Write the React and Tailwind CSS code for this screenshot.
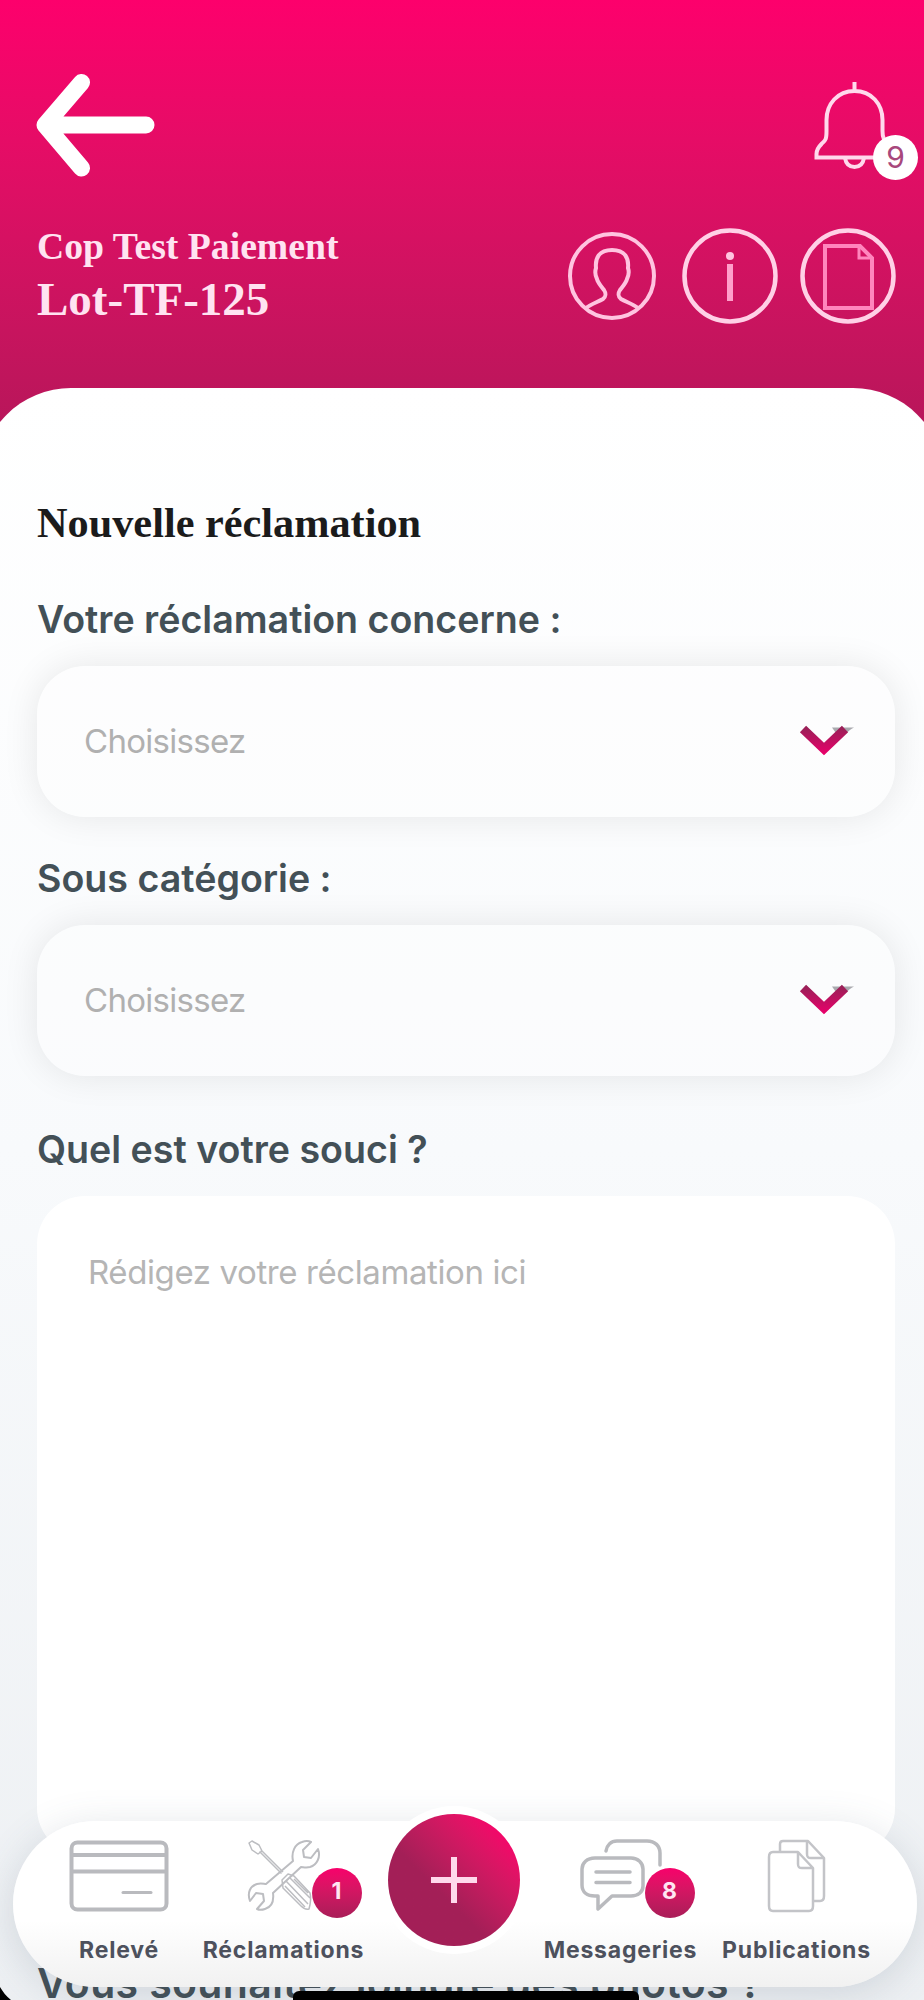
import { useState } from 'react';

const SERIF = "font-['Liberation_Serif',serif]";

const NAV_LEFT = [
  { label: 'Relevé', icon: CardIcon, width: 'w-[168px]' },
  { label: 'Réclamations', icon: ToolsIcon, badge: 1, badgePos: '-right-[41px]', width: 'w-[161px]' },
];

const NAV_RIGHT = [
  { label: 'Messageries', icon: ChatIcon, badge: 8, badgePos: '-right-[31px]', width: 'w-[177px]' },
  { label: 'Publications', icon: PagesIcon, width: 'w-[175px]' },
];

function BackIcon() {
  return (
    <svg className="w-[119px] h-[104px]" viewBox="36 73 119 104" fill="none" stroke="white" strokeWidth="17" strokeLinecap="round" strokeLinejoin="round">
      <path d="M81.500 82.500 45 125l36.500 43M49 125h97" />
    </svg>
  );
}

function BellIcon() {
  return (
    <svg className="w-[80px] h-[90px]" viewBox="813 80 80 90" fill="none" stroke="#ffd9ec" strokeWidth="4">
      <path d="M854.500 82v9M854.500 91c-17 0-28 13-28 29v11c0 9-1 9-5 13-3 3-5 6-5 10v3.500h77V154c0-4-2-7-5-10-4-4-6-5-6-13v-11c0-16-11-29-28-29z" />
      <path d="M845 158c1 6 4 9 9.500 9s8.500-3 9.500-9" />
    </svg>
  );
}

function ProfileIcon() {
  return (
    <svg className="w-[90px] h-[90px]" viewBox="0 0 90 90" fill="none" stroke="#ffc4e0" strokeWidth="4">
      <circle cx="45" cy="45" r="42" />
      <path d="M19 77c5-4 12-6 17-9 3-2 3-6 1-9-3-4-6-7-7-11-2-4-2-8-1-11-1-10 3-18 16-18s17 8 16 18c1 3 1 7-1 11-1 4-4 7-7 11-2 3-2 7 1 9 5 3 12 5 17 9" />
    </svg>
  );
}

function InfoIcon() {
  return (
    <svg className="w-[96px] h-[96px]" viewBox="0 0 96 96" fill="none" stroke="#ffd0e6" strokeWidth="4.500">
      <circle cx="48" cy="48" r="45.500" />
      <path d="M48 36v37" stroke="#ff9fcb" strokeWidth="6" />
      <circle cx="48" cy="28" r="4" fill="#ffc4e0" stroke="none" />
    </svg>
  );
}

function DocumentIcon() {
  return (
    <svg className="w-[96px] h-[96px]" viewBox="0 0 96 96" fill="none" stroke="#ffd0e6" strokeWidth="4.500">
      <circle cx="48" cy="48" r="45.500" />
      <path d="M25 18h35l12 12v50H25z" stroke="#ff86bd" strokeWidth="4" />
      <path d="M59 18v12h13" stroke="#ff86bd" strokeWidth="3" />
    </svg>
  );
}

function SelectChevron() {
  return (
    <svg className="-mt-[3px] w-[56px] h-[32px]" viewBox="0 0 56 32" fill="none">
      <defs>
        <linearGradient id="chevron" x1="0" y1="4" x2="0" y2="30" gradientUnits="userSpaceOnUse">
          <stop offset="0" stopColor="#9a2058" />
          <stop offset="1" stopColor="#e8006a" />
        </linearGradient>
      </defs>
      <path d="M33 3.500h22c-3 1.500-6 4-8 6l-7 4z" fill="#a9a9ae" />
      <path d="M4 5 25 25 46 5" stroke="url(#chevron)" strokeWidth="9" />
    </svg>
  );
}

function CardIcon() {
  return (
    <svg className="w-[100px] h-[72px]" viewBox="0 0 100 72" fill="none" stroke="#b9babe" strokeWidth="4">
      <rect x="2.500" y="2.500" width="95" height="67" rx="6" />
      <path d="M2 15h96M2 31.500h96" />
      <path d="M54 52.500h28" strokeWidth="3" strokeLinecap="round" />
    </svg>
  );
}

function ToolsIcon() {
  return (
    <svg className="w-[74px] h-[74px]" viewBox="0 0 74 74" fill="none" stroke="#bcbdc1" strokeWidth="2" strokeLinejoin="round">
      <path d="M2 4l3-2 7 4 3 6-4 3-6-4zM12.500 12.500l22 22M14 11l22 22" strokeWidth="1.500" />
      <path d="M46 22c-2-9 2-17 9-19 4-1.500 7-1 9 0l-8 8 1 7 7 1 7-9c3 8-1 16-8 18-4 1-7 0-9 0L26 54c1 8-1 14-8 16-3 1-6 1-8 0l7-8-1-7-7-1-6 8C0 54 3 47 10 45c4-1 7 0 9 0z" />
      <path d="M35 41l6-6 6 2 16 17c1 4 1 9-1 16-5 1-7-2-9-4L36 49zM39 42l22 23M43 39l20 20M38 47l20 21M47 40l14 14" strokeWidth="1.500" />
    </svg>
  );
}

function ChatIcon() {
  return (
    <svg className="ml-[2px] w-[84px] h-[74px]" viewBox="0 0 84 74" fill="none" stroke="#b9babe" strokeWidth="3.500" strokeLinecap="round" strokeLinejoin="round">
      <path d="M26 12c1-6 5-10 11-10h30c8 0 13 5 13 12v12" />
      <path d="M15 19h36c7 0 12 5 12 11v17c0 6-5 10-12 10H32L18 70V57h-3C7 57 2 53 2 46V30c0-6 5-11 13-11z" />
      <path d="M16 33h34M16 43.500h34" />
    </svg>
  );
}

function PagesIcon() {
  return (
    <svg className="w-[60px] h-[74px]" viewBox="0 0 60 74" fill="none" stroke="#c3c4c8" strokeWidth="2.500" strokeLinejoin="round">
      <path d="M13 12V5c0-2 1-3 3-3h25l16 17v38c0 3-1 5-4 5h-6" />
      <path d="M40 2v13c0 3 1 4 4 4h13M40 2" />
      <path d="M6 13h25l15 16v38c0 3-1 5-4 5H6c-3 0-4-2-4-5V18c0-3 1-5 4-5zM31 13v12c0 3 1 4 4 4h11" />
    </svg>
  );
}

function SelectField({ label }) {
  return (
    <div>
      <p className="text-[37.600px] leading-[44px] font-semibold text-[#435057]">{label}</p>
      <button className="mt-[24px] flex h-[151px] w-full items-center justify-between rounded-[48px] bg-white/30 pr-[40px] pl-[47px] shadow-[0_0_36px_rgba(0,0,0,0.09)]">
        <span className="text-[33px] tracking-[-0.7px] text-[#b0b0b0]">Choisissez</span>
        <SelectChevron />
      </button>
    </div>
  );
}

function NavItem({ label, icon: Icon, badge, badgePos, width }) {
  return (
    <button className={`flex flex-col items-center ${width}`}>
      <span className="relative flex h-[74px] items-center">
        <Icon />
        {badge && (
          <span className={`absolute top-[29px] flex size-[50px] items-center justify-center rounded-full bg-linear-to-b from-[#f8006b] to-[#a91d58] pb-1 text-[23px] font-bold text-[#ffe6f2] ${badgePos}`}>
            {badge}
          </span>
        )}
      </span>
      <span className="mt-[21px] text-[23px] leading-[32px] font-bold tracking-[0.8px] text-[#4d515d]">{label}</span>
    </button>
  );
}

export default function App() {
  const [message, setMessage] = useState('');

  return (
    <div className="relative h-[2000px] w-[924px] overflow-hidden bg-linear-to-b from-[#fd006c] to-[#b8165a] bg-[length:100%_425px] bg-no-repeat font-[Inter,sans-serif]">
      {/* Header */}
      <header className="h-[388px] pt-[73px] pr-[28px] pl-[37px]">
        <div className="flex items-start justify-between">
          <button className="-ml-px"><BackIcon /></button>
          <button className="relative mt-[7px] mr-[3px]">
            <BellIcon />
            <span className="absolute top-[55px] left-[60px] flex size-[45px] items-center justify-center rounded-full bg-white text-[30px] text-[#a8487c]">9</span>
          </button>
        </div>
        <div className="mt-[45px] flex items-start justify-between">
          <div className={`${SERIF} font-bold text-[#ffe3f1]`}>
            <p className="-mt-px text-[37.700px] leading-[50px]">Cop Test Paiement</p>
            <p className="mt-px text-[47px] leading-[54px]">Lot-TF-125</p>
          </div>
          <div className="mt-[6px] flex items-center">
            <ProfileIcon />
            <span className="mr-[22px] ml-[25px]"><InfoIcon /></span>
            <DocumentIcon />
          </div>
        </div>
      </header>

      {/* Form */}
      <main className="-mx-5 h-[1700px] rounded-t-[91px] bg-linear-to-b from-white via-[#f8fafc] via-45% to-[#eceff2] pt-[108px] pr-[49px] pl-[57px]">
        <h1 className={`${SERIF} text-[42.300px] leading-[54px] font-bold text-[#1b1b1b]`}>Nouvelle réclamation</h1>
        <div className="mt-[48px]"><SelectField label="Votre réclamation concerne :" /></div>
        <div className="mt-[40px]"><SelectField label="Sous catégorie :" /></div>
        <p className="mt-[52px] text-[37.600px] leading-[44px] font-semibold text-[#435057]">Quel est votre souci ?</p>
        <textarea
          value={message}
          onChange={(e) => setMessage(e.target.value)}
          placeholder="Rédigez votre réclamation ici"
          className="mt-[24px] block h-[660px] w-full resize-none rounded-[48px] bg-white px-[51px] pt-[52px] text-[33px] leading-[48px] tracking-[-0.4px] placeholder:text-[#b5b5b5]"
        />
        <p className="mt-[105px] text-[41px] leading-[44px] font-semibold tracking-[0.35px] whitespace-nowrap text-[#435057]">Vous souhaitez joindre des photos ?</p>
      </main>

      {/* Bottom bar */}
      <nav className="absolute top-[1821px] left-[13px] flex h-[166px] w-[904px] rounded-full bg-linear-to-b from-white from-60% to-[#f1f1f1] px-[22px] pt-[18px] shadow-[0_8px_40px_rgba(70,90,110,0.18)]">
        <div className="flex">{NAV_LEFT.map((item) => <NavItem key={item.label} {...item} />)}</div>
        <button className="-mt-[33px] ml-[16px] flex size-[148px] shrink-0 items-center justify-center rounded-full bg-white">
          <span className="flex size-[132px] items-center justify-center rounded-full bg-linear-to-bl from-[#fb006b] from-10% to-[#a31f57] to-60%">
            <svg className="size-[48px]" viewBox="0 0 48 48" stroke="#ffd9ec" strokeWidth="6">
              <path d="M24 1v46M1 24h46" />
            </svg>
          </span>
        </button>
        <div className="ml-[4px] flex">{NAV_RIGHT.map((item) => <NavItem key={item.label} {...item} />)}</div>
      </nav>

      {/* Home indicator and screen corner */}
      <div className="absolute top-[1991px] left-[293px] h-[14px] w-[346px] rounded-t-md bg-black" />
      <svg className="absolute bottom-0 left-0 h-[13px] w-[11px]" viewBox="0 0 11 13">
        <path d="M0 0c3 5 6 9 11 13H0z" />
      </svg>
    </div>
  );
}
